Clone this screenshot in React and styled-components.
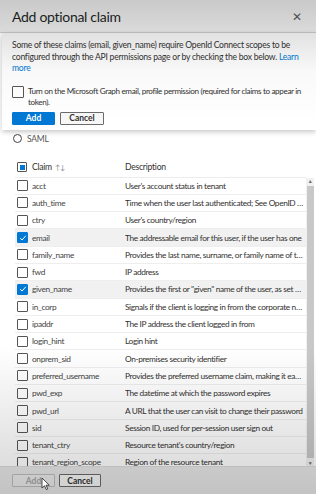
import React from "react"
import styled, { createGlobalStyle } from "styled-components"

const claims = [
  ["acct", "User's account status in tenant"],
  ["auth_time", "Time when the user last authenticated; See OpenID Connect spec"],
  ["ctry", "User's country/region"],
  ["email", "The addressable email for this user, if the user has one", true],
  ["family_name", "Provides the last name, surname, or family name of the user as defined"],
  ["fwd", "IP address"],
  ["given_name", "Provides the first or \"given\" name of the user, as set on the user object", true],
  ["in_corp", "Signals if the client is logging in from the corporate network"],
  ["ipaddr", "The IP address the client logged in from"],
  ["login_hint", "Login hint"],
  ["onprem_sid", "On-premises security identifier"],
  ["preferred_username", "Provides the preferred username claim, making it easier for apps"],
  ["pwd_exp", "The datetime at which the password expires"],
  ["pwd_url", "A URL that the user can visit to change their password"],
  ["sid", "Session ID, used for per-session user sign out"],
  ["tenant_ctry", "Resource tenant's country/region"],
  ["tenant_region_scope", "Region of the resource tenant"],
]

const GlobalStyle = createGlobalStyle`
  body {
    margin: 0;
    font-family: Lato, "Open Sans", sans-serif;
    color: #323130;
  }
`

const Panel = styled.div`
  position: relative;
  width: 316px;
  height: 494px;
  overflow: hidden;
  background: #fff;
  display: flex;
  flex-direction: column;
  letter-spacing: -0.25px;
`

const Header = styled.div`
  height: 32px;
  flex: none;
  display: flex;
  align-items: center;
  justify-content: space-between;
  padding: 0 12px;
  background: linear-gradient(#d6d6d6, #e4e4e4);
  border-bottom: 1px solid #c8c8c8;
`

const Title = styled.h1`
  margin: 0;
  font-size: 14px;
  font-weight: 400;
  letter-spacing: -0.3px;
  color: #201f1e;
`

const Close = styled.span`
  font-size: 12px;
  color: #555;
  margin-right: 2px;
`

const Callout = styled.div`
  position: relative;
  z-index: 2;
  flex: none;
  margin-left: 2px;
  padding: 7px 10px 5px 10px;
  background: linear-gradient(#ececec, #fff 40%);
  box-shadow: 0 2px 5px rgba(0, 0, 0, 0.22);
`

const Note = styled.p`
  margin: 0;
  font-size: 8.6px;
  line-height: 11.5px;
  color: #323130;
`

const Learn = styled.span`
  color: #0078d4;
`

const CheckLine = styled.label`
  display: flex;
  gap: 4px;
  margin-top: 11px;
  font-size: 8.1px;
  line-height: 11px;
  letter-spacing: -0.35px;
`

const Buttons = styled.div`
  display: flex;
  gap: 5px;
  margin-top: ${(p) => p.$top || 0}px;
`

const Button = styled.button`
  width: ${(p) => p.$w || 43}px;
  height: 13px;
  padding: 0;
  font-family: inherit;
  font-size: 8.5px;
  font-weight: 700;
  letter-spacing: 0;
  border-radius: 1px;
  border: 1px solid ${(p) => (p.$primary ? "#0078d4" : p.$disabled ? "#bdbdbd" : "#6b6b6b")};
  background: ${(p) => (p.$primary ? "#0078d4" : p.$disabled ? "#ececec" : "#f7f7f7")};
  color: ${(p) => (p.$primary ? "#fff" : p.$disabled ? "#a6a6a6" : "#323130")};
`

const Box = styled.span`
  flex: none;
  box-sizing: border-box;
  width: ${(p) => p.$size || 11}px;
  height: ${(p) => p.$size || 11}px;
  border: 1px solid ${(p) => (p.$checked ? "#0078d4" : "#555")};
  border-radius: 1px;
  background: ${(p) => (p.$checked ? "#0078d4" : "#fff")};
  display: flex;
  align-items: center;
  justify-content: center;
`

const Inner = styled.span`
  width: 5px;
  height: 5px;
  background: #0078d4;
`

const Radio = styled.div`
  display: flex;
  align-items: center;
  gap: 5px;
  padding: 4px 0 0 13px;
  height: 10px;
  font-size: 8.5px;
  color: #555;
`

const Circle = styled.span`
  width: 9px;
  height: 9px;
  box-sizing: border-box;
  border: 1px solid #444;
  border-radius: 50%;
`

const TableArea = styled.div`
  flex: 1;
  display: flex;
  flex-direction: column;
  margin: 14px 2px 0 15px;
  min-height: 0;
`

const HeadRow = styled.div`
  display: grid;
  grid-template-columns: 15px 93px 1fr;
  align-items: center;
  height: 19px;
  padding-left: 2px;
  font-size: 8.6px;
  color: #323130;
  border-bottom: 1px solid #ececec;
  margin-right: 8px;
`

const Sort = styled.span`
  color: #888;
  font-size: 7px;
  margin-left: 3px;
`

const Scroller = styled.div`
  flex: 1;
  display: flex;
  min-height: 0;
`

const Rows = styled.div`
  flex: 1;
  overflow: hidden;
  min-width: 0;
`

const Row = styled.div`
  display: grid;
  grid-template-columns: 15px 93px 1fr;
  align-items: center;
  height: 17.3px;
  box-sizing: border-box;
  padding-left: 2px;
  border-bottom: 1px solid #eeeeee;
  background: ${(p) => (p.$checked ? "#f1f1f1" : "#fff")};
  font-size: 8.3px;
  letter-spacing: -0.35px;
`

const Name = styled.span`
  color: #444;
  white-space: nowrap;
  overflow: hidden;
`

const Desc = styled.span`
  color: #323130;
  white-space: nowrap;
  overflow: hidden;
  text-overflow: ellipsis;
  padding-right: 2px;
`

const Track = styled.div`
  width: 8px;
  flex: none;
  background: #f1f1f1;
  display: flex;
  flex-direction: column;
  align-items: center;
  font-size: 5px;
  color: #666;
`

const Thumb = styled.div`
  flex: 1;
  width: 7px;
  margin: 2px 0;
  background: #c8c8c8;
`

const Footer = styled.div`
  flex: none;
  height: 27px;
  display: flex;
  align-items: center;
  gap: 4px;
  padding: 0 12px;
  border-top: 1px solid #dcdcdc;
  background: #e8e8e8;
`

const Vignette = styled.div`
  position: absolute;
  inset: 0;
  z-index: 5;
  pointer-events: none;
  background: linear-gradient(
    rgba(0, 0, 0, 0.06),
    rgba(0, 0, 0, 0) 25%,
    rgba(0, 0, 0, 0) 70%,
    rgba(0, 0, 0, 0.16)
  );
`

const Cursor = styled.svg`
  position: absolute;
  z-index: 6;
  left: 41px;
  top: 477px;
`

const Check = () => (
  <svg width="8" height="8" viewBox="0 0 8 8">
    <path d="M1.2 4.2 L3.1 6 L6.8 1.8" fill="none" stroke="#fff" strokeWidth="1" />
  </svg>
)

const App = () => (
  <Panel>
    <GlobalStyle />
    <Header>
      <Title>Add optional claim</Title>
      <Close>✕</Close>
    </Header>
    <Callout>
      <Note>
        Some of these claims (email, given_name) require OpenId Connect scopes to be
        configured through the API permissions page or by checking the box below. <Learn>Learn more</Learn>
      </Note>
      <CheckLine>
        <Box $size={12} />
        <span>Turn on the Microsoft Graph email, profile permission (required for claims to appear in token).</span>
      </CheckLine>
      <Buttons $top={4}>
        <Button $primary>Add</Button>
        <Button $w={44}>Cancel</Button>
      </Buttons>
    </Callout>
    <Radio>
      <Circle />
      SAML
    </Radio>
    <TableArea>
      <HeadRow>
        <Box $size={10}>
          <Inner />
        </Box>
        <span>
          Claim<Sort>↑↓</Sort>
        </span>
        <span>Description</span>
      </HeadRow>
      <Scroller>
        <Rows>
          {claims.map(([name, desc, checked]) => (
            <Row key={name} $checked={checked}>
              <Box $checked={checked}>{checked && <Check />}</Box>
              <Name>{name}</Name>
              <Desc>{desc}</Desc>
            </Row>
          ))}
        </Rows>
        <Track>
          <span>▲</span>
          <Thumb />
          <span>▼</span>
        </Track>
      </Scroller>
    </TableArea>
    <Footer>
      <Button $disabled>Add</Button>
      <Button $w={42}>Cancel</Button>
    </Footer>
    <Cursor width="10" height="14" viewBox="0 0 10 14">
      <path d="M1 1 L1 11 L3.5 8.8 L5.3 12.6 L6.8 11.9 L5 8.2 L8.3 8.2 Z" fill="#fff" stroke="#222" strokeWidth="0.8" />
    </Cursor>
    <Vignette />
  </Panel>
)

export default App
